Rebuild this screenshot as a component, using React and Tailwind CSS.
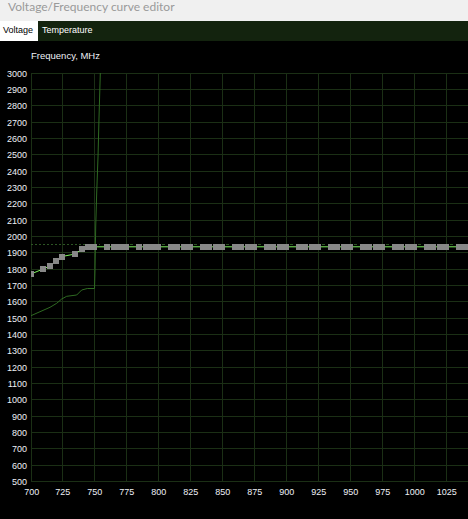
import React from "react";

const rows = Array.from({ length: 26 }, (_, i) => ({
  v: 3000 - i * 100,
  y: Math.floor(73 + i * 16.33 + 0.1),
}));
const cols = Array.from({ length: 14 }, (_, k) => ({
  v: 700 + k * 25,
  x: k === 0 ? 31 : 30 + 32 * k,
}));

const leftBoxes = [
  [31, 271, 3, 6],
  [40, 266, 6, 6],
  [47, 263, 6, 6],
  [53, 258, 6, 6],
  [59, 254, 6, 6],
  [72, 251, 6, 6],
  [79, 246, 6, 6],
  [85, 244, 12, 6],
  [104, 244, 6, 6],
  [111, 244, 18, 6],
  [136, 244, 6, 6],
  [143, 244, 18, 6],
];
const pairBoxes = [];
for (let g = 158; g <= 446; g += 32) {
  pairBoxes.push([g + 10, 244, 12, 6]);
  pairBoxes.push([g + 23, 244, 12, 6]);
}
const gapDashes = [];
for (let g = 126; g <= 446; g += 32) gapDashes.push(g + 4);

const dimCurve =
  "31,315.7 40,311.7 50,307.3 56.7,303.3 61.7,299 66.7,296.3 76.7,295 81.7,290 87.3,288.5 94.5,288.5 95,270 95.7,227 96.7,193 98,157 99,118 100.3,73";
const brightCurve =
  "31,274 43,269 50,266 56,261 62,256.5 75,254 82,249 88,246.8 468,246.8";

export default function App() {
  return (
    <div className="w-[468px] h-[519px] bg-black overflow-hidden flex flex-col">
      <div className="h-[21px] bg-[#f0f0f0] pl-[8px] text-[12px] leading-[14px] text-[#9a9a9a] font-['Lato',sans-serif]">
        Voltage/Frequency curve editor
      </div>
      <div className="h-[20px] bg-[#13230e] flex items-stretch text-[9px] font-['Liberation_Sans',Arial,sans-serif]">
        <div className="w-[38px] bg-white text-black flex items-center pl-[3px]">Voltage</div>
        <div className="text-white flex items-center pl-[4px]">Temperature</div>
      </div>
      <svg
        width="468"
        height="478"
        viewBox="0 41 468 478"
        className="block"
        style={{ fontFamily: "'Liberation Sans', Arial, sans-serif" }}
      >
        <defs>
          <clipPath id="plot">
            <rect x="31" y="73" width="437" height="409" />
          </clipPath>
        </defs>
        <text x="31" y="59" fontSize="9.5" fill="#eef0f6">
          Frequency, MHz
        </text>
        <g shapeRendering="crispEdges" fill="#1b2f15">
          {rows.map((r) => (
            <rect key={"h" + r.v} x="31" y={r.y} width="437" height="1" />
          ))}
          {cols.map((c) => (
            <rect key={"v" + c.v} x={c.x} y="73" width="1" height="409" />
          ))}
        </g>
        <g fontSize="9" fill="#eef0f6">
          {rows.map((r) => (
            <text key={"yl" + r.v} x="27" y={r.y + 3.8} textAnchor="end">
              {r.v}
            </text>
          ))}
          {cols.map((c) => (
            <text key={"xl" + c.v} x={c.x + 0.7} y="495" textAnchor="middle">
              {c.v}
            </text>
          ))}
        </g>
        <g clipPath="url(#plot)">
          <line x1="31" y1="244.5" x2="100" y2="244.5" stroke="#2c5523" strokeWidth="1" strokeDasharray="2 2" />
          <g shapeRendering="crispEdges" fill="#2c5523">
            {gapDashes.map((x) => (
              <rect key={"d" + x} x={x} y="244" width="2.5" height="1" />
            ))}
          </g>
          <polyline points={dimCurve} fill="none" stroke="#2f6b22" strokeWidth="1" />
          <polyline points={brightCurve} fill="none" stroke="#7df05e" strokeWidth="1" />
          <g fill="#888888" shapeRendering="crispEdges">
            {[...leftBoxes, ...pairBoxes].map(([x, y, w, h], i) => (
              <rect key={"b" + i} x={x} y={y} width={w} height={h} />
            ))}
          </g>
        </g>
      </svg>
    </div>
  );
}
